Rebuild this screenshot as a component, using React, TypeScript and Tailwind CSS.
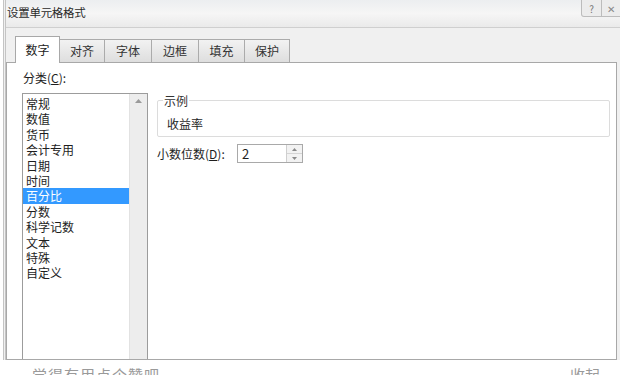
import React from 'react';

const tabs = [
  { label: '数字', w: 'w-[45px]', active: true },
  { label: '对齐', w: 'w-[45px]' },
  { label: '字体', w: 'w-[47px]' },
  { label: '边框', w: 'w-[47px]' },
  { label: '填充', w: 'w-[46px]' },
  { label: '保护', w: 'w-[45px]' },
];

const categories = ['常规', '数值', '货币', '会计专用', '日期', '时间', '百分比', '分数', '科学记数', '文本', '特殊', '自定义'];

export default function App() {
  return (
    <div
      className="w-[620px] h-[375px] overflow-hidden bg-white text-[12px] text-[#1e1e1e]"
      style={{ fontFamily: '"Noto Sans CJK SC", "Liberation Sans", sans-serif' }}
    >
      {/* dialog */}
      <div className="h-[360px] flex flex-col bg-[#f0f0f0] border-l-[3px] border-double border-[#c4c4c4] ml-[3px]">
        {/* title bar */}
        <div className="h-[28px] shrink-0 flex items-start justify-between border-b border-[#cfcfcf] bg-gradient-to-b from-[#eceef0] via-[#f6f6f6] to-[#eaeaea]">
          <span className="mt-[4px] ml-[1px] text-[11.5px] tracking-tight text-[#2a2a2a]">设置单元格格式</span>
          <div className="flex h-[17px]">
            <div className="w-[21px] flex items-center justify-center border border-t-0 border-[#bcbcbc] rounded-bl-[3px] bg-[#ececec] text-[10px] text-[#777]">?</div>
            <div className="w-[18px] flex items-center justify-center border-b border-[#bcbcbc] bg-[#ececec] text-[10px] text-[#888]">✕</div>
          </div>
        </div>

        {/* tabs */}
        <div className="mt-[7px] ml-[9px] flex items-end h-[27px] shrink-0">
          {tabs.map((t) =>
            t.active ? (
              <div
                key={t.label}
                className={`${t.w} h-[27px] -mb-px z-10 flex items-center justify-center bg-white border border-b-0 border-[#a8a8a8] text-[12px] text-[#222]`}
              >
                {t.label}
              </div>
            ) : (
              <div
                key={t.label}
                className={`${t.w} h-[23px] flex items-center justify-center bg-gradient-to-b from-[#f2f2f2] to-[#dedede] border border-l-0 border-b-0 border-[#ababab] text-[12px] text-[#333]`}
              >
                {t.label}
              </div>
            )
          )}
        </div>

        {/* panel */}
        <div className="flex-1 mr-[3px] border border-[#a8a8a8] bg-white overflow-hidden flex flex-col">
          <div className="ml-[16px] mt-[7px] h-[16px] leading-[16px]">
            分类(<span className="underline">C</span>):
          </div>
          <div className="flex flex-1 min-h-0 mt-[7px] ml-[15px]">
            {/* category list */}
            <div className="w-[126px] flex border border-b-0 border-[#9c9c9c]">
              <div className="flex-1 pt-[2px]">
                {categories.map((c) => (
                  <div
                    key={c}
                    className={
                      c === '百分比'
                        ? 'h-[15.4px] leading-[15.4px] pl-[3px] bg-[#3399ff] text-white'
                        : 'h-[15.4px] leading-[15.4px] pl-[3px]'
                    }
                  >
                    {c}
                  </div>
                ))}
              </div>
              <div className="w-[18px] bg-[#ededed] border-l border-[#e2e2e2] flex justify-center pt-[5px]">
                <svg width="7" height="4" viewBox="0 0 7 4">
                  <path d="M0 4 L3.5 0 L7 4 Z" fill="#9a9a9a" />
                </svg>
              </div>
            </div>

            {/* right side */}
            <div className="flex-1 ml-[9px] mr-[6px] mt-[7px]">
              <div className="relative h-[37px] border border-[#dcdcdc] rounded-[2px]">
                <span className="absolute -top-[7px] left-[5px] bg-white px-[1px] leading-[14px] text-[#333]">示例</span>
                <div className="mt-[16px] ml-[9px] leading-[14px]">收益率</div>
              </div>
              <div className="mt-[7px] flex items-center h-[19px]">
                <span className="w-[80px]">
                  小数位数(<span className="underline">D</span>):
                </span>
                <div className="flex h-[19px] w-[66px] border border-[#a9a9a9]">
                  <div className="flex-1 pl-[4px] leading-[17px] text-[13px]">2</div>
                  <div className="w-[16px] flex flex-col border-l border-[#cfcfcf] bg-[#f2f2f2]">
                    <div className="flex-1 flex items-center justify-center border-b border-[#d4d4d4]">
                      <svg width="5" height="3" viewBox="0 0 5 3"><path d="M0 3 L2.5 0 L5 3 Z" fill="#8a8a8a" /></svg>
                    </div>
                    <div className="flex-1 flex items-center justify-center">
                      <svg width="5" height="3" viewBox="0 0 5 3"><path d="M0 0 L2.5 3 L5 0 Z" fill="#8a8a8a" /></svg>
                    </div>
                  </div>
                </div>
              </div>
            </div>
          </div>
        </div>
      </div>

      {/* page text below, cut off by window */}
      <div className="flex justify-between mt-[5px] px-[32px] text-[15px] leading-[20px] text-[#9a9a9a]">
        <span className="tracking-[1px]">觉得有用点个赞吧</span>
        <span className="mr-[-12px]">收起</span>
      </div>
    </div>
  );
}
